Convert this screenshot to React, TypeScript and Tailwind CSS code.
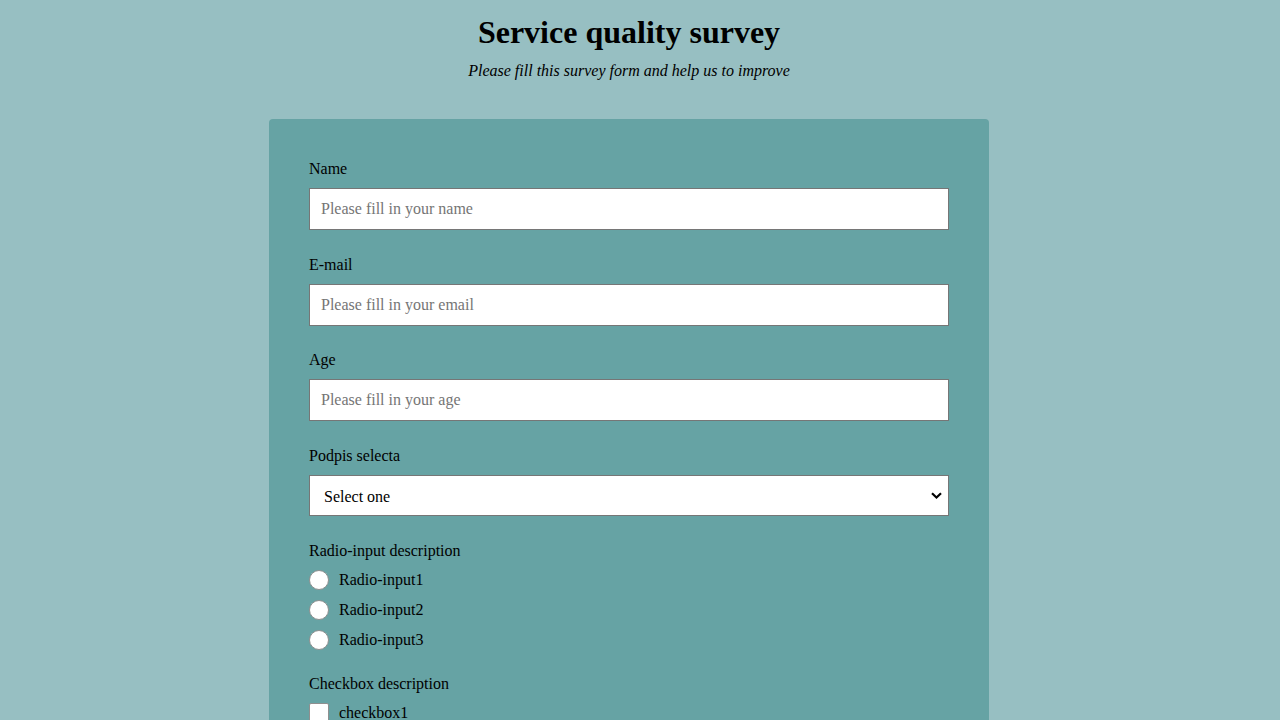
import React from "react";

const serif = { fontFamily: '"Liberation Serif", "Times New Roman", serif' };

function Field({ label, placeholder, type = "text" }: { label: string; placeholder: string; type?: string }) {
  return (
    <div className="mb-[25.67px]">
      <label className="block mb-[10px] text-[16px] leading-[18px]">{label}</label>
      <input
        type={type}
        placeholder={placeholder}
        className="block w-full h-[42px] bg-white border border-[#767676] px-[11px] text-[16px] text-black placeholder:text-[#757575] outline-none"
        style={serif}
      />
    </div>
  );
}

export default function App() {
  return (
    <div className="min-h-screen bg-[#97bfc2] text-black pb-10 pr-[22px]" style={serif}>
      <header className="text-center pt-[14px]">
        <h1 className="text-[32px] font-bold leading-[37px]">Service quality survey</h1>
        <p className="italic text-[16px] leading-[18px] mt-[11px]">Please fill this survey form and help us to improve</p>
      </header>
      <form className="w-[720px] mx-auto mt-[39px] bg-[#66a3a4] rounded-[4px] px-[40px] pt-[41px] pb-[40px]">
        <Field label="Name" placeholder="Please fill in your name" />
        <Field label="E-mail" placeholder="Please fill in your email" type="email" />
        <Field label="Age" placeholder="Please fill in your age" type="number" />
        <div className="mb-[25.67px]">
          <label className="block mb-[10px] text-[16px] leading-[18px]">Podpis selecta</label>
          <div className="relative">
            <select
              className="block w-full h-[41px] appearance-none bg-white border border-[#767676] pl-[14px] pr-[24px] pt-[3px] text-[16px] text-black"
              style={serif}
            >
              <option>Select one</option>
              <option>Option 1</option>
              <option>Option 2</option>
            </select>
            <svg
              className="pointer-events-none absolute right-[7px] top-[17px]"
              width="11"
              height="7"
              viewBox="0 0 11 7"
              fill="none"
            >
              <path d="M1 1.2 L5.5 5.5 L10 1.2" stroke="#000" strokeWidth="2.2" />
            </svg>
          </div>
        </div>
        <div className="mb-[25.67px]">
          <p className="mb-[10px] text-[16px] leading-[18px]">Radio-input description</p>
          <div className="flex flex-col gap-[10px]">
            {["Radio-input1", "Radio-input2", "Radio-input3"].map((r) => (
              <label key={r} className="flex items-center gap-[10px] text-[16px] leading-[18px]">
                <input
                  type="radio"
                  name="radio"
                  className="appearance-none w-[20px] h-[20px] rounded-full bg-white border border-[#8f8f8f] m-0"
                />
                {r}
              </label>
            ))}
          </div>
        </div>
        <div className="mb-[25.67px]">
          <p className="mb-[10px] text-[16px] leading-[18px]">Checkbox description</p>
          <div className="flex flex-col gap-[10px]">
            {["checkbox1", "checkbox2", "checkbox3"].map((r) => (
              <label key={r} className="flex items-center gap-[10px] text-[16px] leading-[18px]">
                <input
                  type="checkbox"
                  className="appearance-none w-[20px] h-[20px] bg-white border border-[#8f8f8f] rounded-[2px] m-0"
                />
                {r}
              </label>
            ))}
          </div>
        </div>
        <div className="mb-[25px]">
          <p className="mb-[10px] text-[16px] leading-[18px]">Textarea description</p>
          <textarea
            className="block w-full h-[120px] bg-white border border-[#767676] p-[11px] text-[16px]"
            placeholder="Enter your comment here..."
            style={serif}
          />
        </div>
        <button type="button" className="w-full h-[42px] bg-[#37777a] text-white text-[16px]" style={serif}>
          Submit
        </button>
      </form>
    </div>
  );
}
